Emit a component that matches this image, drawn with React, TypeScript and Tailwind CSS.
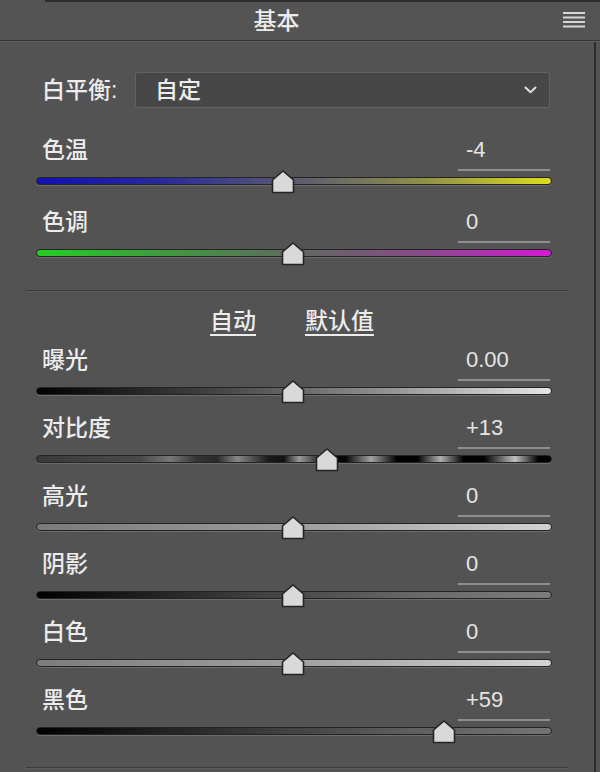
import React from "react";

type SliderDef = {
  label: string;
  value: string;
  pos: number; // thumb centre x in page coords
  track: string;
};

const TRACK_LEFT = 36;

const topSliders: SliderDef[] = [
  {
    label: "色温",
    value: "-4",
    pos: 283,
    track:
      "bg-[linear-gradient(to_right,#1010b4_0%,#2a2a9a_25%,#5a5a72_50%,#8f8f48_75%,#dcdc22_100%)]",
  },
  {
    label: "色调",
    value: "0",
    pos: 293,
    track:
      "bg-[linear-gradient(to_right,#22d022_0%,#3f9a3f_25%,#5e6a5e_50%,#8a4a8a_75%,#d41ad4_100%)]",
  },
];

const toneSliders: SliderDef[] = [
  {
    label: "曝光",
    value: "0.00",
    pos: 293,
    track: "bg-[linear-gradient(to_right,#000000_0%,#3a3a3a_30%,#8a8a8a_65%,#e6e6e6_100%)]",
  },
  {
    label: "对比度",
    value: "+13",
    pos: 327,
    track:
      "bg-[linear-gradient(to_right,#3a3a3a_0%,#4a4a4a_20%,#777777_26%,#343434_31%,#2a2a2a_35%,#888888_39%,#1a1a1a_45%,#111111_48%,#999999_51%,#0a0a0a_56%,#050505_60%,#a2a2a2_65%,#000000_70%,#000000_74%,#b0b0b0_78.5%,#000000_83%,#000000_87%,#c0c0c0_93%,#000000_97.5%,#000000_100%)]",
  },
  {
    label: "高光",
    value: "0",
    pos: 293,
    track: "bg-[linear-gradient(to_right,#7a7a7a_0%,#9c9c9c_50%,#d2d2d2_100%)]",
  },
  {
    label: "阴影",
    value: "0",
    pos: 293,
    track: "bg-[linear-gradient(to_right,#000000_0%,#3c3c3c_40%,#6a6a6a_75%,#7c7c7c_100%)]",
  },
  {
    label: "白色",
    value: "0",
    pos: 293,
    track: "bg-[linear-gradient(to_right,#7c7c7c_0%,#a0a0a0_50%,#d4d4d4_100%)]",
  },
  {
    label: "黑色",
    value: "+59",
    pos: 444,
    track: "bg-[linear-gradient(to_right,#000000_0%,#303030_35%,#5c5c5c_70%,#747474_100%)]",
  },
];

function Thumb() {
  return (
    <svg width="24" height="24" viewBox="0 0 24 24" className="block">
      <path
        d="M1.5 10 L12 1 L22.5 10 V22.5 H1.5 Z"
        fill="#d9d9d9"
        stroke="#242424"
        strokeWidth="1.6"
        strokeLinejoin="round"
      />
    </svg>
  );
}

function Slider({ s }: { s: SliderDef }) {
  return (
    <div className="flex flex-col">
      <div className="flex h-[35px] items-start justify-between">
        <span className="ml-[6px] text-[23px] font-medium leading-[28px] text-[#ececec]">{s.label}</span>
        <div className="mr-[2px] h-[35px] w-[92px] border-b-2 border-[#8e8e8e] pl-[8px] text-[22px] leading-[28px] text-[#e4e4e4]">
          {s.value}
        </div>
      </div>
      <div className="relative flex h-[20px] items-center">
        <div
          className={`h-[8px] w-full rounded-full border border-[#242424] shadow-[0_1px_0_#6c6c6c] ${s.track}`}
        />
        <div className="absolute top-[-1px]" style={{ left: s.pos - TRACK_LEFT - 12 }}>
          <Thumb />
        </div>
      </div>
    </div>
  );
}

function MenuIcon() {
  return (
    <svg width="22" height="16" viewBox="0 0 22 16" className="block">
      <rect x="0" y="0" width="22" height="2" fill="#d6d6d6" />
      <rect x="0" y="4.5" width="22" height="2" fill="#d6d6d6" />
      <rect x="0" y="9" width="22" height="2" fill="#d6d6d6" />
      <rect x="0" y="13.5" width="22" height="2" fill="#d6d6d6" />
    </svg>
  );
}

function Chevron() {
  return (
    <svg width="13" height="8" viewBox="0 0 13 8" className="block">
      <path d="M1.5 1.5 L6.5 6.2 L11.5 1.5" fill="none" stroke="#e0e0e0" strokeWidth="2" strokeLinecap="round" strokeLinejoin="round" />
    </svg>
  );
}

export default function App() {
  return (
    <div className="h-[772px] w-[600px] overflow-hidden bg-[#535353] font-['Liberation_Sans','Noto_Sans_CJK_SC',sans-serif] text-[#e8e8e8]">
      {/* top strip */}
      <div className="flex h-[2px]">
        <div className="w-[45px]" />
        <div className="flex-1 bg-[#2c2c2c]" />
      </div>
      {/* header */}
      <div className="flex h-[38px] items-center bg-[#545454]">
        <div className="flex w-[553px] justify-center text-[23px] font-medium leading-[28px] text-[#ececec]">基本</div>
        <div className="ml-[10px] mt-[-2px]">
          <MenuIcon />
        </div>
      </div>
      <div className="h-px bg-[#353535]" />
      <div className="h-px bg-[#5e5e5e]" />

      {/* body */}
      <div className="flex h-[730px]">
        <div className="w-[594px]">
          <div className="pl-[36px] pr-[42px] pt-[30px]">
            {/* white balance */}
            <div className="flex h-[36px] items-center">
              <span className="ml-[6px] text-[23px] font-medium leading-[28px] text-[#ececec]">白平衡:</span>
              <div className="ml-auto mr-[2px] flex h-[36px] w-[415px] items-center justify-between rounded-[3px] border border-[#626262] bg-[#474747] pl-[19px] pr-[12px]">
                <span className="text-[23px] font-medium leading-[28px] text-[#ececec]">自定</span>
                <Chevron />
              </div>
            </div>

            <div className="mt-[28px] flex flex-col gap-[17px]">
              {topSliders.map((s) => (
                <Slider key={s.label} s={s} />
              ))}
            </div>
          </div>

          <div className="mx-[26px] mt-[27px] h-px bg-[#3c3c3c]" />
          <div className="mx-[26px] h-px bg-[#5c5c5c]" />

          <div className="pl-[36px] pr-[42px]">
            <div className="mt-[14px] flex h-[30px] items-center justify-center gap-[49px] pr-[4px]">
              <span className="text-[23px] font-medium leading-[28px] text-[#ececec] underline decoration-2 underline-offset-[5px]">自动</span>
              <span className="text-[23px] font-medium leading-[28px] text-[#ececec] underline decoration-2 underline-offset-[5px]">默认值</span>
            </div>

            <div className="mt-[10px] flex flex-col gap-[13px]">
              {toneSliders.map((s) => (
                <Slider key={s.label} s={s} />
              ))}
            </div>
          </div>

          <div className="mx-[26px] mt-[26px] h-px bg-[#3c3c3c]" />
          <div className="mx-[26px] h-px bg-[#5c5c5c]" />
        </div>
        <div className="w-[2px] bg-[#2c2c2c]" />
        <div className="flex-1" />
      </div>
    </div>
  );
}
